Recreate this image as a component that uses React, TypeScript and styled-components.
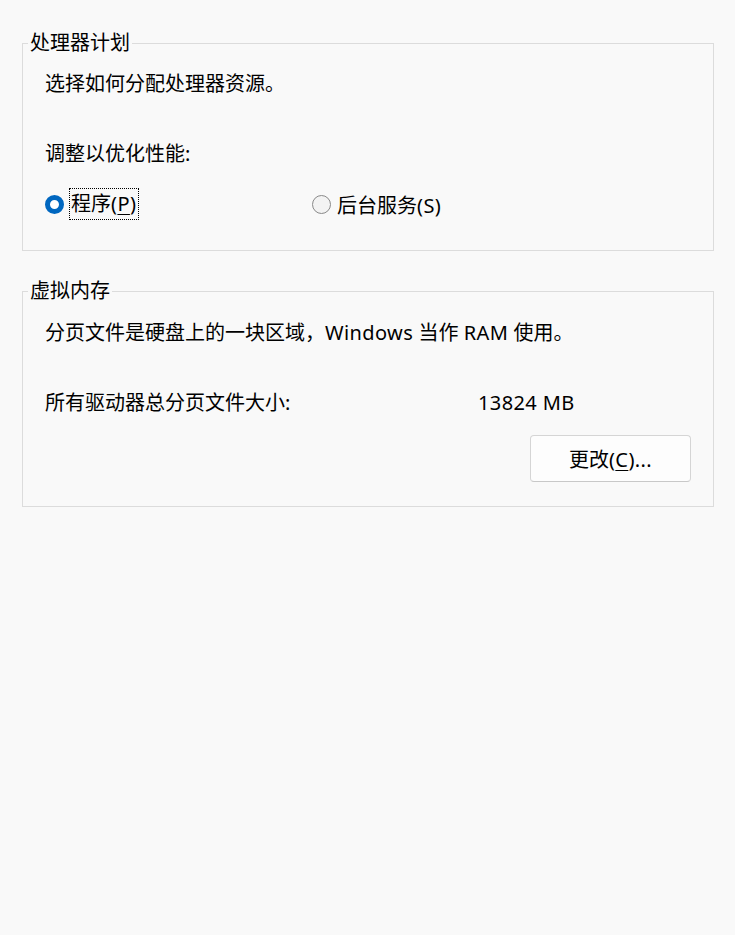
import React from "react";
import styled, { createGlobalStyle } from "styled-components";

const Global = createGlobalStyle`
  html, body { margin: 0; padding: 0; background: #f9f9f9; }
  body {
    font-family: "Segoe UI", "Noto Sans", "Noto Sans CJK SC", sans-serif;
    color: #000;
    font-size: 20px;
  }
`;

const Page = styled.div`
  padding: 30px 22px 0 22px;
  display: flex;
  flex-direction: column;
  gap: 27px;
  width: 692px;
`;

const Group = styled.fieldset`
  margin: 0;
  border: 1px solid #dcdcdc;
  padding: 0 22px 0 22px;
  min-width: 0;
`;

const Legend = styled.legend`
  padding: 0 2px;
  margin-left: -17px;
  font-size: 20px;
  line-height: 26px;
`;

const Text = styled.div<{ $top: number }>`
  margin-top: ${(p) => p.$top}px;
  line-height: 28px;
`;

const Latin = styled.span`
  letter-spacing: 0.4px;
`;

const RadioRow = styled.div`
  margin-top: 20px;
  display: flex;
  align-items: center;
  height: 32px;
`;

const RadioItem = styled.label<{ $width?: number }>`
  display: flex;
  align-items: center;
  gap: 6px;
  width: ${(p) => (p.$width ? `${p.$width}px` : "auto")};
`;

const Dot = styled.span<{ $on?: boolean }>`
  box-sizing: border-box;
  width: 19px;
  height: 19px;
  border-radius: 50%;
  flex: none;
  ${(p) =>
    p.$on
      ? `border: 5px solid #0067c0; background: #ffffff;`
      : `border: 1px solid #8a8a8a; background: #f3f3f3;`}
`;

const Focus = styled.span`
  outline: 1px dotted #000;
  outline-offset: 0;
  padding: 1px 2px 1px 1px;
  line-height: 28px;
`;

const U = styled.span`
  text-decoration: underline;
  text-underline-offset: 3px;
  text-decoration-thickness: 1px;
`;

const InfoRow = styled.div`
  margin-top: 42px;
  display: grid;
  grid-template-columns: 433px auto;
  line-height: 28px;
`;

const ButtonRow = styled.div`
  display: flex;
  justify-content: flex-end;
  margin-top: 18px;
  margin-bottom: 24px;
`;

const Button = styled.button`
  width: 161px;
  height: 47px;
  box-sizing: border-box;
  background: #fdfdfd;
  border: 1px solid #d5d5d5;
  border-bottom-color: #c8c8c8;
  border-radius: 4px;
  font: inherit;
  font-size: 20px;
  color: #000;
  padding: 0;
`;

export default function App() {
  return (
    <>
      <Global />
      <Page>
        <Group>
          <Legend>处理器计划</Legend>
          <Text $top={14}>选择如何分配处理器资源。</Text>
          <Text $top={42}>调整以优化性能:</Text>
          <RadioRow>
            <RadioItem $width={267}>
              <Dot $on />
              <Focus>
                程序<Latin>(<U>P</U>)</Latin>
              </Focus>
            </RadioItem>
            <RadioItem>
              <Dot />
              <span>
                后台服务<Latin>(S)</Latin>
              </span>
            </RadioItem>
          </RadioRow>
          <div style={{ height: 30 }} />
        </Group>
        <Group>
          <Legend>虚拟内存</Legend>
          <Text $top={15}>
            分页文件是硬盘上的一块区域，<Latin>Windows</Latin> 当作 <Latin>RAM</Latin> 使用。
          </Text>
          <InfoRow>
            <span>所有驱动器总分页文件大小:</span>
            <Latin>13824 MB</Latin>
          </InfoRow>
          <ButtonRow>
            <Button>
              更改<Latin>(<U>C</U>)...</Latin>
            </Button>
          </ButtonRow>
        </Group>
      </Page>
    </>
  );
}
